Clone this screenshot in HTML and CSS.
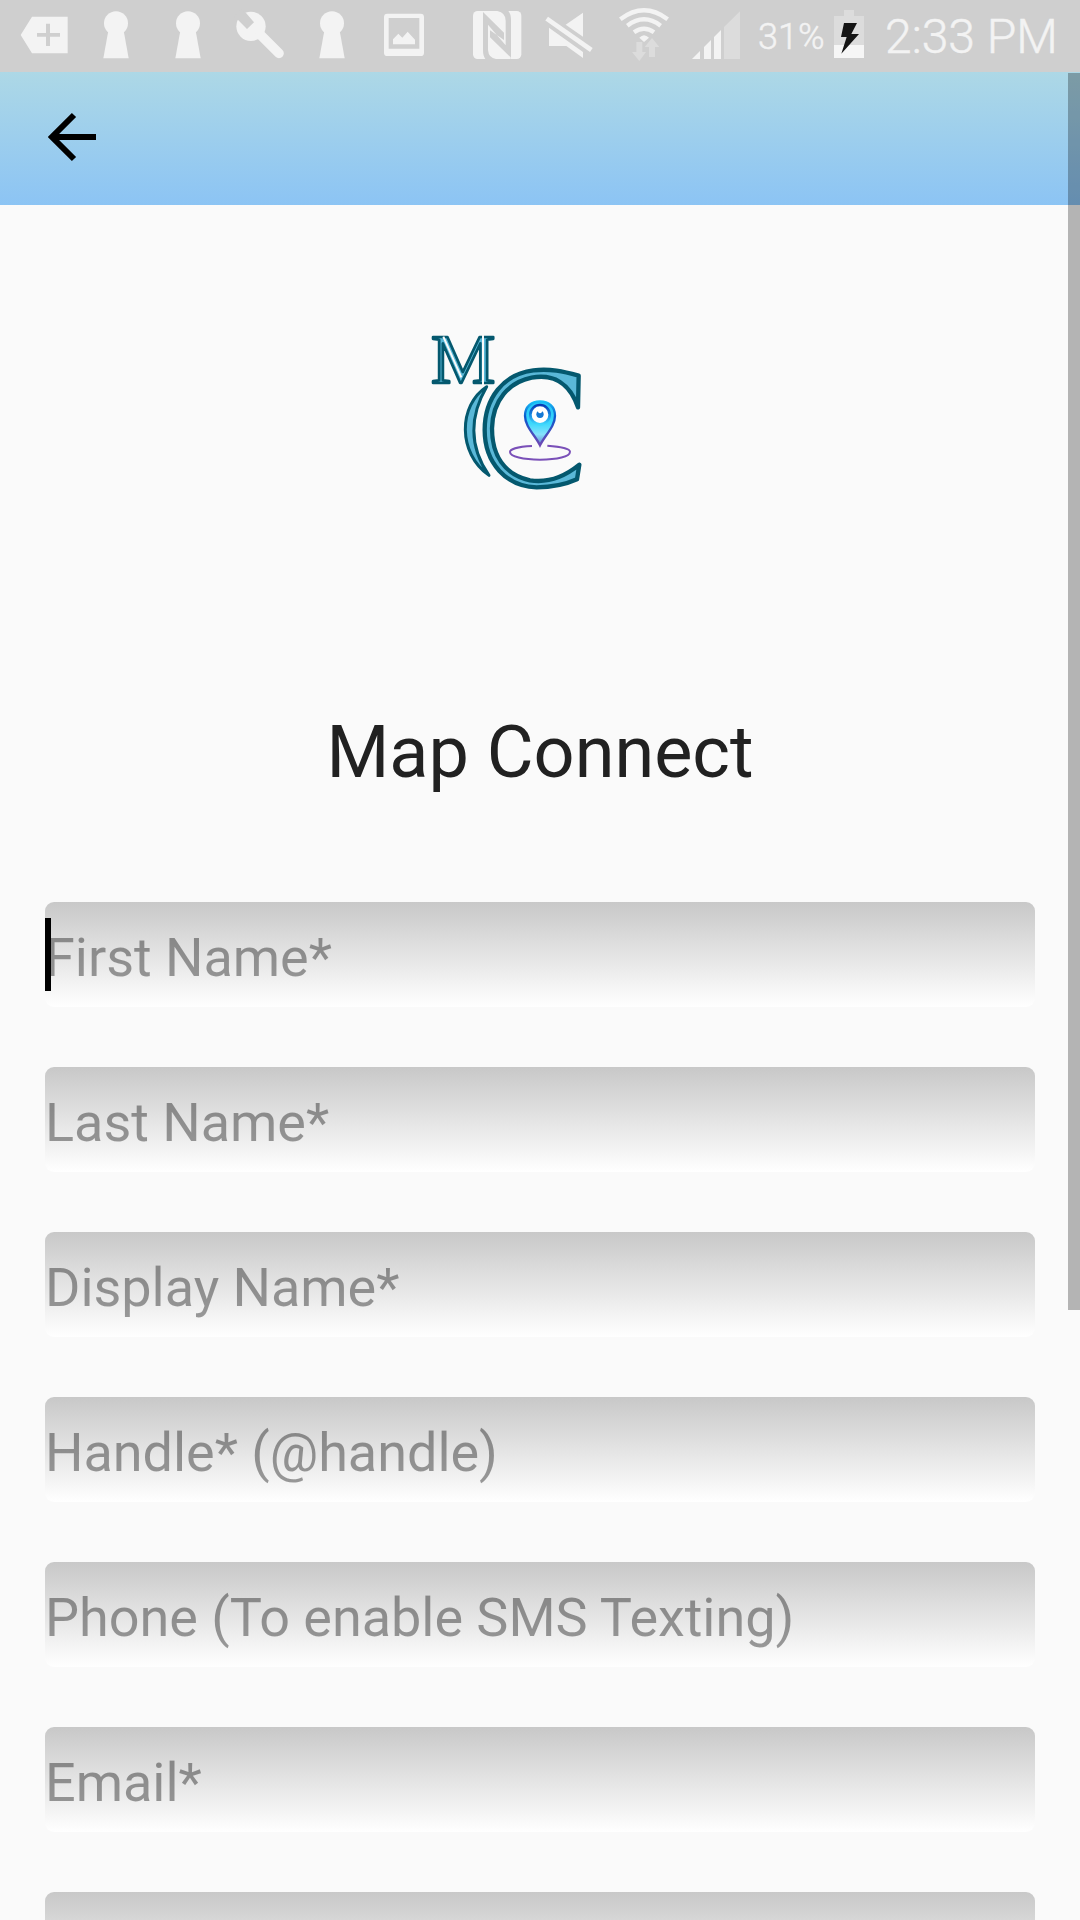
FILE: index.html
```html
<!DOCTYPE html>
<html lang="en">
<head>
<meta charset="utf-8">
<title>Map Connect</title>
<link rel="stylesheet" href="styles.css">
</head>
<body>
<div class="screen">
  <header class="status">
    <div class="notifications">
      <svg class="cell" viewBox="0 0 216 216"><path fill-rule="evenodd" d="M38 105 72 50H179V160H72ZM114 71V99H87V110H114V138H126V110H156V99H126V71Z"/></svg>
      <svg class="cell" viewBox="0 0 216 216"><circle cx="108" cy="70" r="36"/><path d="M85 92H131L146 175H70Z"/></svg>
      <svg class="cell" viewBox="0 0 216 216"><circle cx="108" cy="70" r="36"/><path d="M85 92H131L146 175H70Z"/></svg>
      <svg class="cell" viewBox="0 0 216 216"><circle cx="81" cy="79" r="44"/><path class="line" stroke-width="29" stroke-linecap="round" d="M108 103 165 160"/><path class="cut" d="M66 39 90 67 69 87 43 61 30 50 50 28Z"/></svg>
      <svg class="cell" viewBox="0 0 216 216"><circle cx="108" cy="70" r="36"/><path d="M85 92H131L146 175H70Z"/></svg>
      <svg class="cell" viewBox="0 0 216 216"><path fill-rule="evenodd" d="M58 41H158Q168 41 168 51V158Q168 168 158 168H58Q48 168 48 158V51Q48 41 58 41ZM62 54V146H154V54ZM75 133V118L91 101 103 113 119 95 141 119V133Z"/></svg>
    </div>
    <svg class="nfc" viewBox="330 0 162 216"><rect x="339" y="33" width="145" height="144" rx="14"/><path class="cut" fill-rule="evenodd" d="M369 36 432 98V120L390 91V112L452 172V177H453V60Q453 42 445 33H412Q437 38 437 62V136L384 74V150Q386 174 408 177H376Q369 168 369 150Z"/></svg>
    <svg class="mute" viewBox="546 0 162 216"><path d="M669 38V110L617 74ZM567 83 669 156V174L619 138H567Z"/><path class="gap" stroke-width="9" d="M556 67 690 161"/><path class="line" stroke-width="14" d="M560 56 694 150"/></svg>
    <svg class="wifi" viewBox="774 0 156 216"><g class="line" stroke-width="13"><path d="M781 58Q852 4 923 58"/><path d="M802 77Q852 39 902 77"/><path d="M822 97Q852 76 882 97"/></g><path d="M838 113Q852 98 867 113L852 126Z"/><path class="dim" d="M829 126H847V156H858L838 183 816 156H829ZM876 114 898 141H885V171H867V141H854Z"/></svg>
    <svg class="signal" viewBox="990 0 156 216"><path d="M996 177 1020 153V177ZM1032 177V141L1053 120V177ZM1062 177V111L1083 90V177Z"/><path class="dim" d="M1092 177V81L1140 34V177Z"/></svg>
    <span class="percent">31%</span>
    <svg class="battery" viewBox="342 0 90 216"><path class="dim" d="M372 30H402V48H432V135H342V48H372Z"/><path class="full" d="M342 135H432V174H342Z"/><path class="bolt" d="M372 69H411L394 102H417L364 161 380 111H363Z"/></svg>
    <span class="clock">2:33 PM</span>
  </header>
  <nav class="appbar">
    <svg class="back" viewBox="144 336 147 150"><path d="M222 345 156 411 222 477M156 411H288"/></svg>
  </nav>
  <main class="content">
    <svg class="logo" viewBox="0 0 510 540">
      <defs>
        <linearGradient id="pin" x1="0" y1="0" x2="0" y2="1"><stop offset="0" stop-color="#20c4f8"/><stop offset=".5" stop-color="#3cd8fc"/><stop offset=".75" stop-color="#86e2fc"/><stop offset="1" stop-color="#6a7ccc"/></linearGradient>
        <linearGradient id="edge" x1="0" y1="0" x2="0" y2="1"><stop offset="0" stop-color="#18c0f8"/><stop offset=".35" stop-color="#0a58cc"/><stop offset="1" stop-color="#6f48b4"/></linearGradient>
        <linearGradient id="eye" x1="0" y1="0" x2="0" y2="1"><stop offset="0" stop-color="#0a3cb4"/><stop offset=".5" stop-color="#1488e4"/><stop offset="1" stop-color="#40d8fc"/></linearGradient>
      </defs>
      <g class="mono">
        <text class="initial" x="33" y="188" textLength="193" lengthAdjust="spacingAndGlyphs">M</text>
        <path class="slit" d="M70 50 124 172M189 42V196"/>
        <path d="M200 200C115 255 112 400 207 466C145 378 150 285 200 200Z"/>
        <path class="ring" d="M476 167C430 154 390 145 340 151C250 162 194 235 194 330C194 430 260 500 350 502C400 502 440 492 471 478L478 434C430 473 380 489 330 481C252 463 216 405 216 325C218 240 267 187 335 173C400 161 450 190 474 262Z"/>
      </g>
      <path class="orbit" d="M336 378C292 380 270 388 270 396C270 410 310 419 360 419C412 419 450 410 450 395C450 387 424 380 382 377"/>
      <path d="M360 376C345 345 315 320 315 287C315 260 334 244 360 244S405 260 405 287C405 320 375 345 360 376Z" fill="url(#pin)" stroke="url(#edge)" stroke-width="7"/>
      <circle cx="360" cy="284" r="29" fill="#fff" stroke="url(#eye)" stroke-width="8"/>
      <circle cx="360" cy="283" r="11" fill="#1478d4"/><circle cx="360" cy="274" r="6" fill="#fff"/>
    </svg>
    <h1 class="title">Map Connect</h1>
    <form class="form">
      <div class="field active"><span>First Name*</span></div>
      <div class="field"><span>Last Name*</span></div>
      <div class="field"><span>Display Name*</span></div>
      <div class="field"><span>Handle* (@handle)</span></div>
      <div class="field"><span>Phone (To enable SMS Texting)</span></div>
      <div class="field"><span>Email*</span></div>
      <div class="field"></div>
    </form>
  </main>
  <div class="scrollbar"></div>
</div>
</body>
</html>
```
FILE: styles.css
```css
* { box-sizing: border-box; }
body { margin: 0; background: #fafafa; font-family: Roboto, sans-serif; }
.screen { position: relative; width: 1080px; height: 1920px; overflow: hidden; background: #fafafa; }

.status { display: flex; height: 72px; padding-left: 8px; background: #cfcfcf; color: #f3f3f3; fill: #f3f3f3; }
.status svg { display: block; flex: none; height: 72px; }
.notifications { display: flex; }
.cell { width: 72px; }
.line { fill: none; stroke: #f3f3f3; }
.gap { fill: none; stroke: #cfcfcf; }
.cut { fill: #cfcfcf; }
.dim { fill: #dcdcdc; }
.full { fill: #f6f6f6; }
.bolt { fill: #141414; }
.nfc { width: 54px; margin-left: 30px; }
.mute { width: 54px; margin-left: 18px; }
.wifi { width: 52px; margin-left: 22px; }
.signal { width: 52px; margin-left: 20px; }
.percent, .clock { font-weight: 300; line-height: 74px; white-space: nowrap; -webkit-text-stroke: .5px #f3f3f3; }
.percent { width: 76px; margin-left: 16px; font-size: 36px; }
.battery { width: 30px; }
.clock { margin-left: 21px; font-size: 48px; }

.appbar { display: flex; align-items: center; height: 133px; padding-left: 48px; background: linear-gradient(#add8e6, #8cc4f4); }
.back { width: 49px; height: 50px; margin-top: -3px; fill: none; stroke: #000; stroke-width: 18; }

.content { display: flex; flex-direction: column; padding: 115px 45px 0; }
.logo { width: 170px; height: 180px; margin-left: 375px; }
.mono { fill: #5ab8d8; stroke: #04586e; stroke-width: 9; stroke-linejoin: round; }
.mono .ring { stroke-width: 13; }
.mono .initial { font-family: "Liberation Serif", serif; font-size: 210px; stroke-width: 8; }
.mono .slit { fill: none; stroke: #fafafa; stroke-width: 6; }
.orbit { fill: none; stroke: #7a50b8; stroke-width: 6; }
.title { height: 84px; margin: 211px 0 0; font-size: 72px; font-weight: 400; line-height: 84px; text-align: center; color: #212121; white-space: nowrap; }
.form { display: flex; flex-direction: column; gap: 60px; margin-top: 107px; }
.field { display: flex; align-items: center; flex: none; height: 105px; padding-top: 5px; border-radius: 9px; background: linear-gradient(#c8c8c8, #fff); font-size: 54px; letter-spacing: -.04px; color: rgba(0, 0, 0, .38); white-space: nowrap; }
.active { position: relative; }
.active::before { content: ""; position: absolute; left: 0; top: 16px; width: 6px; height: 73px; background: #000; }
.scrollbar { position: absolute; right: 0; top: 73px; width: 12px; height: 1237px; background: rgba(0, 0, 0, .28); }
```
